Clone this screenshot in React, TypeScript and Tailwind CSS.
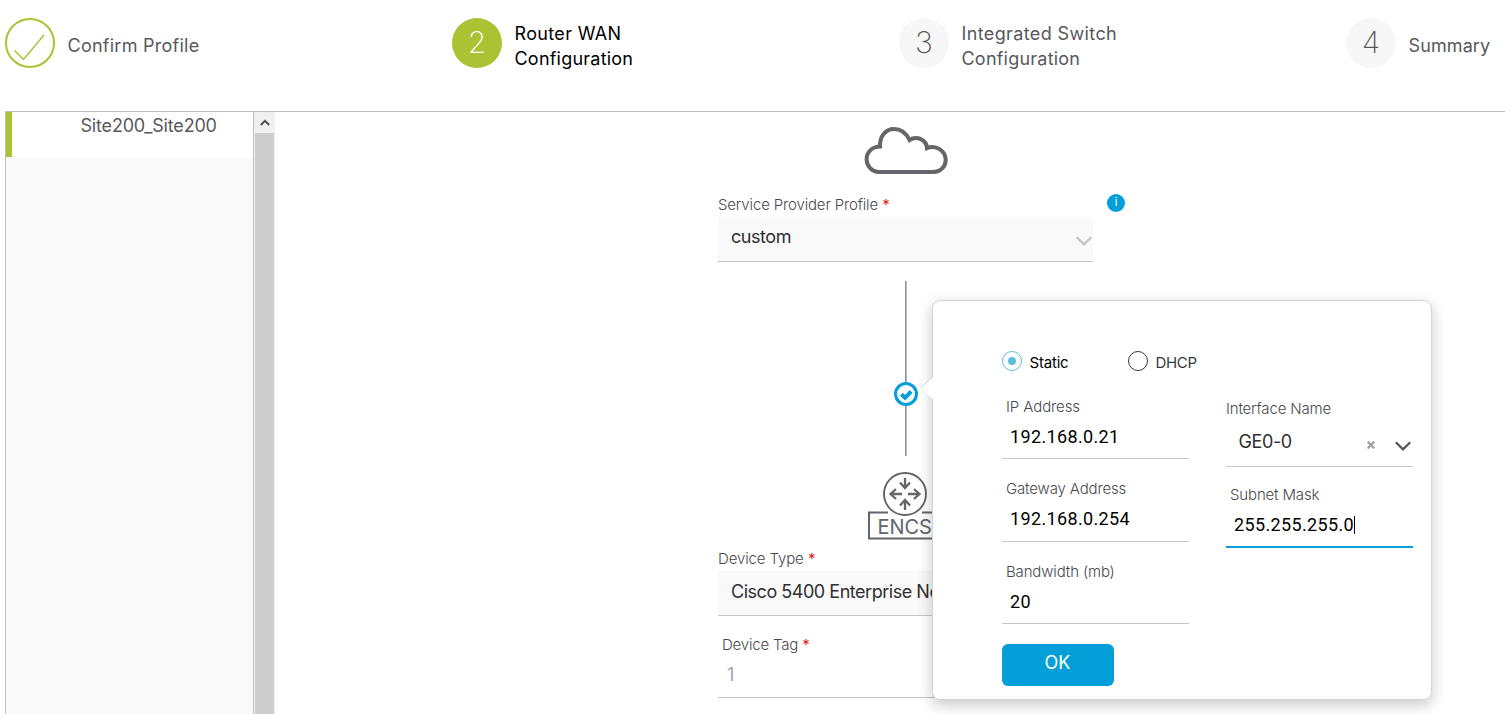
import type { ReactNode } from "react";

function Step({ badge, children, active = false }: { badge: ReactNode; children: ReactNode; active?: boolean }) {
  return (
    <div className="flex w-[447px] shrink-0 items-start pt-[18px]">
      {badge}
      <div
        className={`ml-[12.5px] flex h-[55px] flex-col justify-center text-lg leading-[25px] whitespace-nowrap ${
          active ? "text-black" : "text-[#58585b]"
        }`}
      >
        {children}
      </div>
    </div>
  );
}

function NumberBadge({ n, active = false }: { n: number; active?: boolean }) {
  return (
    <span
      className={`flex size-[50px] shrink-0 items-center justify-center rounded-full pb-px text-[30px] font-extralight ${
        active ? "bg-[#abc233] text-white" : "bg-[#f7f7f7] text-[#58585b]"
      }`}
    >
      {n}
    </span>
  );
}

function Chevron({ className }: { className: string }) {
  return (
    <svg viewBox="0 0 16 10" className={`h-[10px] w-4 shrink-0 stroke-[2.3] ${className}`} fill="none" stroke="currentColor">
      <path d="M.8 1.2 8 8.4l7.2-7.2" />
    </svg>
  );
}

const Required = () => <span className="font-normal text-[#e2231a]">*</span>;

function TextField({ label, value, labelClass }: { label: string; value: string; labelClass: string }) {
  return (
    <div className="flex w-[187px] flex-col border-b border-[#c4c7c9]">
      <span className={`pl-1 text-[15px] leading-5 font-light text-[#4a4a4d] ${labelClass}`}>{label}</span>
      <span className="mt-2 h-[33.5px] pl-2 font-['Roboto','Liberation_Sans',sans-serif] text-lg leading-6 tracking-[0.35px] text-black">
        {value}
      </span>
    </div>
  );
}

function Popover() {
  return (
    <div className="absolute top-[188px] left-[657px] flex h-[400px] w-[500px] rounded-lg border border-[#d5d5d5] bg-white pl-[69px] shadow-[0_5px_15px_rgba(0,0,0,0.22)]">
      <svg viewBox="0 0 14 26" className="absolute top-[74px] -left-[13px] h-[26px] w-[14px]">
        <path d="M14 1 1 13l13 12Z" fill="#fff" />
        <path d="M13 1.5.9 13" fill="none" stroke="#d5d5d5" />
      </svg>
      <div className="flex w-[224px] flex-col pt-[50px]">
        <div className="flex h-5 items-center text-[15px] whitespace-nowrap">
          <span className="flex size-5 shrink-0 items-center justify-center rounded-full border border-[#5bc0de]">
            <span className="size-2 rounded-full bg-[#5bc0de]" />
          </span>
          <span className="mt-[3px] w-[106px] shrink-0 pl-[7.5px] leading-5 tracking-[-0.2px] text-black">Static</span>
          <span className="size-5 shrink-0 rounded-full border border-[#39393b]" />
          <span className="mt-[3px] pl-[7.5px] leading-5 tracking-[-0.35px] text-[#39393b]">DHCP</span>
        </div>
        <div className="mt-[25.9px] flex flex-col gap-5">
          <TextField label="IP Address" value="192.168.0.21" labelClass="tracking-[-0.1px]" />
          <TextField label="Gateway Address" value="192.168.0.254" labelClass="tracking-[-0.15px]" />
          <TextField label="Bandwidth (mb)" value="20" labelClass="tracking-[-0.15px]" />
        </div>
        <button className="mt-[19.6px] flex h-[42px] w-[112px] items-center justify-center rounded-md bg-[#049fd9] pr-px pb-[3px] text-lg text-white">
          OK
        </button>
      </div>
      <div className="flex w-[187px] flex-col pt-[98px]">
        <span className="text-[15px] leading-5 font-light tracking-[-0.17px] text-[#4a4a4d]">Interface Name</span>
        <div className="mt-2 flex h-[40px] items-start border-b border-[#c4c7c9] pl-[12.5px]">
          <span className="flex-1 pt-[3px] text-lg leading-6 tracking-[-0.4px] text-[#2f2f31]">GE0-0</span>
          <svg viewBox="0 0 8 8" className="mt-[14px] mr-[20px] size-2" stroke="#9e9ea2" strokeWidth="2.2">
            <path d="m.6.6 6.8 6.8M7.4.6.6 7.4" />
          </svg>
          <Chevron className="mt-[13.5px] mr-[2px] text-[#58585b]" />
        </div>
        <span className="mt-[18px] pl-1 text-[15px] leading-5 font-light tracking-[-0.15px] text-[#4a4a4d]">Subnet Mask</span>
        <div className="mt-2 flex h-[35px] items-start border-b-2 border-[#049fd9] pl-2">
          <span className="font-['Roboto','Liberation_Sans',sans-serif] text-lg leading-6 tracking-[0.35px] text-black">
            255.255.255.0
          </span>
          <span className="mt-[3px] h-[18px] w-px bg-black" />
        </div>
      </div>
    </div>
  );
}

export default function App() {
  return (
    <div className="flex h-[714px] w-full flex-col overflow-hidden bg-white font-['Inter','Liberation_Sans',sans-serif]">
      <header className="ml-[5px] flex h-[112px] shrink-0 overflow-hidden border-b border-[#c0c0c2]">
        <Step
          badge={
            <svg viewBox="0 0 50 50" className="size-[50px] shrink-0" fill="none" stroke="#abc233">
              <circle cx="25" cy="25" r="24" strokeWidth="2" />
              <path d="m9.5 32.5 9 9L39 17" strokeWidth="1.5" />
            </svg>
          }
        >
          <span className="tracking-[0.25px]">Confirm Profile</span>
        </Step>
        <Step badge={<NumberBadge n={2} active />} active>
          <span className="tracking-[0.35px]">Router WAN</span>
          <span className="tracking-[0.22px]">Configuration</span>
        </Step>
        <Step badge={<NumberBadge n={3} />}>
          <span className="tracking-[0.38px]">Integrated Switch</span>
          <span className="tracking-[0.22px]">Configuration</span>
        </Step>
        <Step badge={<NumberBadge n={4} />}>
          <span className="tracking-[0.1px]">Summary</span>
        </Step>
      </header>

      <div className="flex min-h-0 flex-1">
        <aside className="ml-[5px] w-[249px] shrink-0 border-x border-[#c0c0c2] bg-[#f9f9f9]">
          <div className="h-[45px] border-l-[6px] border-[#abc233] bg-white pt-[2px] pl-[68.5px] text-lg leading-6 tracking-[-0.18px] text-[#58585b]">
            Site200_Site200
          </div>
        </aside>
        <div className="flex w-[21px] shrink-0 flex-col bg-[#f0f0f0] px-px">
          <div className="flex h-[21px] items-center justify-center">
            <svg viewBox="0 0 10 7" className="h-[7px] w-[10px]" fill="none" stroke="#505050" strokeWidth="2">
              <path d="m.8 6 4.2-4.2L9.2 6" />
            </svg>
          </div>
          <div className="flex-1 bg-[#cdcdcd]" />
        </div>

        <main className="relative flex-1">
          <div className="ml-[443px] flex w-[375px] flex-col">
            <svg viewBox="0 0 84 48" className="mt-[15px] ml-[146px] h-[48px] w-[84px]" fill="none" stroke="#636569" strokeWidth="4">
              <path d="M14.5 45C8 45 2.6 39 2.6 32.3c0-7 5.400-12.500 13.400-12.700C15.500 9.500 21.500 2 30 2c7 0 12.300 4.300 15.500 11C53 8 62.500 13 63 21.200 72.500 17.500 81.700 24 81.700 33c0 7-5.700 12-12.200 12Z" />
            </svg>

            <div className="mt-[20px] flex h-[20px] items-center text-[15px] font-light text-[#4a4a4d]">
              <span className="flex-1 whitespace-nowrap">
                <span className="tracking-[-0.15px]">Service Provider Profile</span> <Required />
              </span>
              <span className="-mr-8 mb-[5px] flex size-[18px] items-center justify-center rounded-full bg-[#049fd9] text-[11px] font-normal text-white">
                i
              </span>
            </div>
            <div className="mt-[2px] flex h-[45px] justify-between border-b border-[#c4c7c9] bg-[#f9f9f9] pl-[13px]">
              <span className="pt-2 text-lg leading-6 tracking-[-0.45px] text-[#2f2f31]">custom</span>
              <Chevron className="mt-[19px] mr-px text-[#c4c4c8]" />
            </div>

            <div className="mt-[19px] ml-[176px] flex h-[175px] w-6 flex-col items-center">
              <span className="h-[100.5px] w-[2px] border-l border-[#919194] bg-[#bcbcbe]" />
              <svg viewBox="0 0 24 24" className="size-6 shrink-0">
                <circle cx="12" cy="12" r="10.5" fill="#fff" stroke="#049fd9" strokeWidth="3" />
                <path d="m7.3 12.3 3.7 3.5 6.2-6.3" fill="none" stroke="#049fd9" strokeWidth="4" />
              </svg>
              <span className="w-[2px] flex-1 border-l border-[#919194] bg-[#bcbcbe]" />
            </div>

            <svg viewBox="0 0 76 70" className="mt-[14px] ml-[149px] h-[70px] w-[76px]" fill="none" stroke="#636569" strokeWidth="2">
              <path d="M21 42.500H2v26h72v-26H55" />
              <circle cx="38" cy="24" r="21" strokeWidth="1.9" />
              <path
                d="M38 8v9M33 12.500l5 5.500 5-5.500M38 40v-9M33 35.500l5-5.500 5 5.500M24 24h11M29 19l-5.500 5 5.500 5M52 24H41M47 19l5.500 5-5.500 5"
                strokeWidth="2.3"
              />
              <text x="10.5" y="64" fill="#636569" stroke="none" fontSize="20" letterSpacing="-0.1">
                ENCS
              </text>
            </svg>

            <div className="mt-[9px] text-[15px] leading-5 font-light text-[#4a4a4d]">
              <span className="tracking-[-0.12px]">Device Type</span> <Required />
            </div>
            <div className="mt-[2px] h-[45px] overflow-hidden border-b border-[#c4c7c9] bg-[#f9f9f9] pt-[9px] pl-[13px] text-lg leading-6 tracking-[-0.47px] whitespace-nowrap text-[#2f2f31]">
              Cisco 5400 Enterprise Network
            </div>
            <div className="mt-[19px] border-b border-[#c4c7c9] pl-1">
              <div className="text-[15px] leading-5 font-light text-[#4a4a4d]">
                <span className="tracking-[-0.2px]">Device Tag</span> <Required />
              </div>
              <div className="mt-2 h-[34px] pl-[5px] text-lg leading-6 text-[#a3a3a5]">1</div>
            </div>
          </div>
          <Popover />
        </main>
      </div>
    </div>
  );
}
